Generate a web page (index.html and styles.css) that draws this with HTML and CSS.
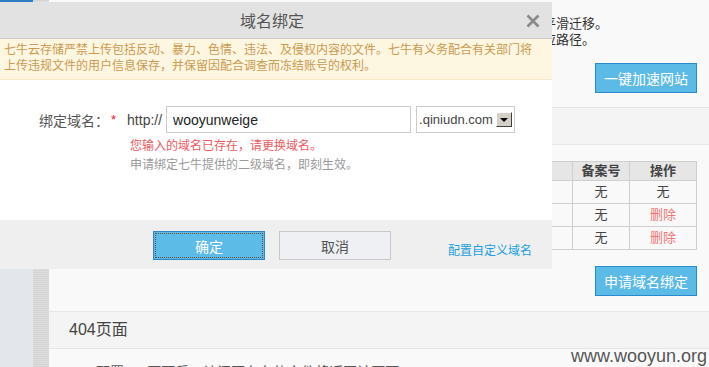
FILE: index.html
```html
<!DOCTYPE html>
<html lang="zh-CN">
<head>
    <meta charset="UTF-8">
    <meta name="viewport" content="width=device-width, initial-scale=1.0">
    <title>域名绑定</title>
    <link rel="stylesheet" href="styles.css">
</head>
<body>
    <div class="page">
        <!-- Left navigation -->
        <div class="sidebar">
            <div class="nav-active"></div>
        </div>
        <div class="rail"></div>

        <!-- Main content behind the dialog -->
        <main class="content">
            <section class="intro">
                <p>如果您已经有自己的网站，可以通过七牛云存储的镜像存储功能，将网站静态资源平滑迁移。</p>
                <p>只需将源站域名配置为镜像源，再把网站中静态资源的链接替换为七牛域名下的对应路径。</p>
                <div class="actions">
                    <button class="btn-blue">一键加速网站</button>
                </div>
            </section>

            <section class="panel">
                <div class="panel-head">域名设置</div>
                <div class="panel-body">
                    <table class="domains">
                        <colgroup>
                            <col style="width: 230px">
                            <col style="width: 180px">
                            <col style="width: 93px">
                            <col style="width: 57px">
                            <col style="width: 67px">
                        </colgroup>
                        <tr>
                            <th>域名</th>
                            <th>CNAME</th>
                            <th>状态</th>
                            <th>备案号</th>
                            <th>操作</th>
                        </tr>
                        <tr>
                            <td>wooyun.qiniudn.com</td>
                            <td>-</td>
                            <td>成功</td>
                            <td>无</td>
                            <td>无</td>
                        </tr>
                        <tr>
                            <td>wooyun.u.qiniudn.com</td>
                            <td>-</td>
                            <td>成功</td>
                            <td>无</td>
                            <td class="del">删除</td>
                        </tr>
                        <tr>
                            <td>wooyunweige.qiniudn.com</td>
                            <td>-</td>
                            <td>处理中</td>
                            <td>无</td>
                            <td class="del">删除</td>
                        </tr>
                    </table>
                    <div class="actions">
                        <button class="btn-blue">申请域名绑定</button>
                    </div>
                </div>
            </section>

            <section class="panel">
                <div class="panel-head">404页面</div>
                <div class="panel-body short">
                    <p class="note">配置404页面后，访问不存在的文件将返回该页面</p>
                </div>
            </section>
        </main>
    </div>

    <!-- Bind domain dialog -->
    <div class="dialog">
        <div class="dialog-head">
            <span class="dialog-title">域名绑定</span>
            <span class="dialog-close">
                <svg width="14" height="14" viewBox="0 0 14 14">
                    <path d="M1.5 1.5 L12.5 12.5 M12.5 1.5 L1.5 12.5" stroke="#8a8a8a" stroke-width="2.6" fill="none"/>
                </svg>
            </span>
        </div>
        <div class="dialog-warn">七牛云存储严禁上传包括反动、暴力、色情、违法、及侵权内容的文件。七牛有义务配合有关部门将上传违规文件的用户信息保存，并保留因配合调查而冻结账号的权利。</div>
        <div class="dialog-body">
            <div class="form-row">
                <span class="label">绑定域名：</span>
                <span class="required">*</span>
                <span class="prefix">http://</span>
                <input class="domain-input" type="text" value="wooyunweige">
                <div class="suffix">
                    <span>.qiniudn.com</span>
                    <span class="suffix-arrow"></span>
                </div>
            </div>
            <p class="msg-error">您输入的域名已存在，请更换域名。</p>
            <p class="msg-hint">申请绑定七牛提供的二级域名，即刻生效。</p>
        </div>
        <div class="dialog-foot">
            <button class="btn-ok">确定</button>
            <button class="btn-cancel">取消</button>
            <a class="custom-link" href="#">配置自定义域名</a>
        </div>
    </div>

    <div class="watermark">www.wooyun.org</div>
</body>
</html>
```

FILE: styles.css
```css
body {
    margin: 0;
    font-family: "Liberation Sans", "Noto Sans CJK SC", sans-serif;
    color: #333;
    background-color: #f9f9f9;
    overflow: hidden;
}
p {
    margin: 0;
}
.page {
    display: flex;
    height: 367px;
}
.sidebar {
    width: 34px;
    background-color: #e3e7eb;
}
.nav-active {
    height: 40px;
    background-color: #2d7fc3;
}
.rail {
    width: 16px;
    background-color: #d8d8d8;
    background-image: repeating-linear-gradient(0deg, #d5d5d5 0, #d5d5d5 1px, #dcdcdc 1px, #dcdcdc 2px);
}
.content {
    flex: 1;
    background-color: #f9f9f9;
}
.intro {
    padding: 16px 12px 14px 26px;
    border-bottom: 1px solid #e6e6e6;
    font-size: 13px;
    line-height: 16px;
}
.actions {
    display: flex;
    justify-content: flex-end;
}
.intro .actions {
    margin-top: 15px;
}
.btn-blue {
    width: 102px;
    height: 30px;
    padding: 0;
    border: 1px solid #2a8ad0;
    background-color: #5cbae6;
    color: #fff;
    font-family: inherit;
    font-size: 14px;
}
.panel-head {
    height: 36px;
    line-height: 36px;
    padding-left: 20px;
    background-color: #f4f4f4;
    border-bottom: 1px solid #e6e6e6;
    font-size: 16px;
    color: #444;
}
.panel-body {
    padding: 16px 12px 15px 20px;
    border-bottom: 1px solid #e6e6e6;
}
.panel-body.short {
    padding: 13px 0 0 47px;
    border-bottom: none;
}
.domains {
    width: 627px;
    table-layout: fixed;
    border-collapse: collapse;
    font-size: 13px;
    margin-bottom: 16px;
}
.domains th,
.domains td {
    border: 1px solid #cfcfcf;
    padding: 0;
    text-align: center;
    overflow: hidden;
    white-space: nowrap;
}
.domains th {
    height: 18px;
    line-height: 18px;
    background-color: #e6e6e6;
    color: #444;
}
.domains td {
    height: 22px;
    line-height: 22px;
    color: #444;
}
.domains td.del {
    color: #f27575;
}
.note {
    font-size: 14px;
    line-height: 20px;
    color: #555;
}

/* dialog */
.dialog {
    position: absolute;
    left: 0;
    top: 2px;
    width: 552px;
    height: 267px;
    background-color: #fff;
    display: flex;
    flex-direction: column;
}
.dialog-head {
    position: relative;
    height: 36px;
    background-color: #e2e2e2;
    border-bottom: 1px solid #cbcbcb;
    display: flex;
    align-items: center;
    justify-content: center;
}
.dialog-title {
    font-size: 16px;
    color: #555;
    margin-right: 8px;
}
.dialog-close {
    position: absolute;
    right: 12px;
    top: 12px;
    width: 14px;
    height: 14px;
    display: flex;
}
.dialog-warn {
    padding: 3px 18px 5px 4px;
    background-color: #fdf6e1;
    border-bottom: 1px solid #f5e8cb;
    font-size: 12px;
    line-height: 16px;
    color: #cc9a50;
}
.dialog-body {
    height: 114px;
    padding-top: 26px;
}
.form-row {
    display: flex;
    align-items: center;
    padding-left: 39px;
    height: 27px;
    font-size: 14px;
}
.label {
    color: #555;
}
.required {
    margin-left: 2px;
    color: #e02020;
    font-size: 13px;
}
.prefix {
    margin-left: 11px;
    color: #444;
}
.domain-input {
    box-sizing: border-box;
    width: 245px;
    height: 27px;
    margin: 0 0 0 4px;
    padding: 0 6px;
    border: 1px solid #cccccc;
    font-family: inherit;
    font-size: 14px;
    color: #222;
    outline: none;
}
.suffix {
    box-sizing: border-box;
    width: 99px;
    height: 27px;
    margin-left: 5px;
    padding-left: 2px;
    border: 1px solid #cccccc;
    display: flex;
    align-items: center;
    font-size: 13px;
    color: #444;
}
.suffix-arrow {
    box-sizing: border-box;
    width: 16px;
    height: 15px;
    margin-left: 3px;
    background-color: #d4d0c8;
    border-top: 1px solid #fff;
    border-left: 1px solid #fff;
    border-right: 1px solid #404040;
    border-bottom: 1px solid #404040;
    display: flex;
    align-items: center;
    justify-content: center;
}
.suffix-arrow::after {
    content: "";
    border-left: 4px solid transparent;
    border-right: 4px solid transparent;
    border-top: 4px solid #000;
}
.msg-error,
.msg-hint {
    padding-left: 130px;
    font-size: 12px;
    line-height: 18px;
}
.msg-error {
    margin-top: 4px;
    color: #ee5a5e;
}
.msg-hint {
    margin-top: 1px;
    color: #9a9a9a;
}
.dialog-foot {
    flex: 1;
    background-color: #efefef;
    display: flex;
    align-items: flex-end;
    padding: 0 20px 9px 153px;
}
.btn-ok,
.btn-cancel {
    width: 112px;
    height: 29px;
    padding: 0;
    font-family: inherit;
    font-size: 14px;
}
.btn-ok {
    border: 1px solid #2a86c8;
    background-color: #5dbbe7;
    color: #fff;
    outline: 1px dotted #6e4a30;
    outline-offset: -3px;
}
.btn-cancel {
    margin-left: 14px;
    border: 1px solid #c8c8c8;
    background-color: #eef0f4;
    color: #555;
}
.custom-link {
    margin-left: auto;
    margin-bottom: 2px;
    font-size: 12px;
    line-height: 14px;
    color: #1c9fe0;
    text-decoration: none;
}
.watermark {
    position: absolute;
    right: 2px;
    top: 346px;
    font-size: 18px;
    line-height: 20px;
    color: #555;
    text-shadow: 0 0 2px #fff;
}
```
